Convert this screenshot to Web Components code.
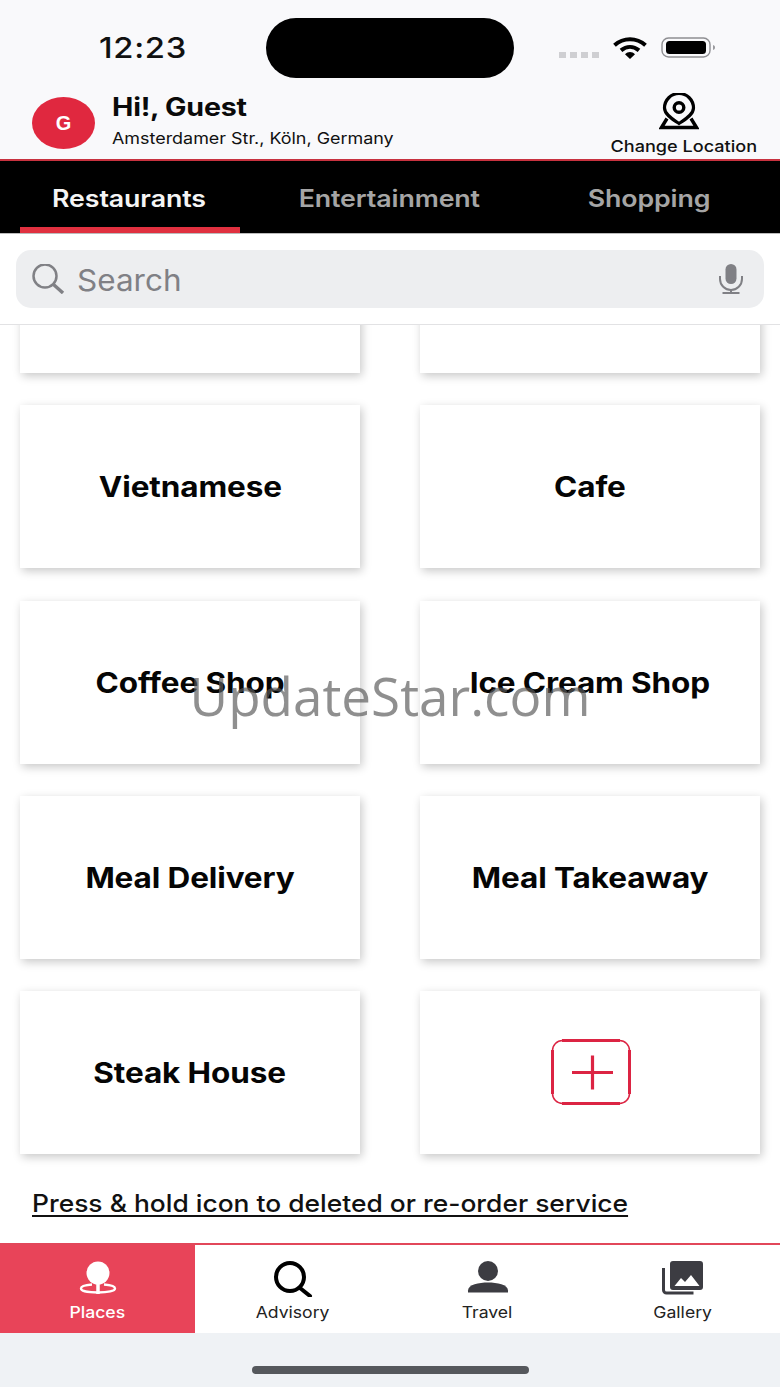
<!DOCTYPE html>
<html lang="en">
<head>
<meta charset="utf-8">
<title>Places</title>
<style>
  html, body { margin: 0; padding: 0; }
  body { width: 780px; height: 1387px; overflow: hidden; background: #fff; font-family: Inter, "Liberation Sans", Arial, sans-serif; color: #000; }
  app-shell { height: 1387px; }
</style>
</head>
<body>
<app-shell>
  <status-bar slot="top" time="12:23"></status-bar>
  <user-header slot="top" initial="G" name="Hi!, Guest" address="Amsterdamer Str., Köln, Germany"></user-header>
  <tab-bar slot="top">
    <tab-item active>Restaurants</tab-item>
    <tab-item>Entertainment</tab-item>
    <tab-item>Shopping</tab-item>
  </tab-bar>
  <search-box slot="top" placeholder="Search"></search-box>

  <service-grid>
    <service-card></service-card>
    <service-card></service-card>
    <service-card>Vietnamese</service-card>
    <service-card>Cafe</service-card>
    <service-card>Coffee Shop</service-card>
    <service-card>Ice Cream Shop</service-card>
    <service-card>Meal Delivery</service-card>
    <service-card>Meal Takeaway</service-card>
    <service-card>Steak House</service-card>
    <service-card add></service-card>
  </service-grid>

  <bottom-nav slot="bottom">
    <nav-item icon="places" active>Places</nav-item>
    <nav-item icon="advisory">Advisory</nav-item>
    <nav-item icon="travel">Travel</nav-item>
    <nav-item icon="gallery">Gallery</nav-item>
  </bottom-nav>
  <home-bar slot="bottom"></home-bar>
  <water-mark slot="over">UpdateStar.com</water-mark>
</app-shell>

<script>
class AppShell extends HTMLElement {
  constructor() {
    super();
    this.attachShadow({ mode: 'open' });
    this.shadowRoot.innerHTML = `
      <style>
        :host { display: flex; flex-direction: column; position: relative; overflow: hidden; }
        #main { flex: 1; min-height: 0; overflow: hidden; }
      </style>
      <slot name="top"></slot>
      <section id="main"><slot></slot></section>
      <slot name="bottom"></slot>
      <slot name="over"></slot>
    `;
  }
}

// the reference is stretched sideways, so most labels get a scaleX
class StatusBar extends HTMLElement {
  constructor() {
    super();
    this.attachShadow({ mode: 'open' });
    this.shadowRoot.innerHTML = `
      <style>
        :host { display: flex; align-items: flex-start; height: 90px; background: #f9f9fb; box-sizing: border-box; padding-top: 18px; }
        #time { width: 266px; box-sizing: border-box; padding: 13px 0 0 99px; font: 500 29px/33px Inter, sans-serif; letter-spacing: .6px; color: #111; }
        #time span { display: inline-block; transform: scaleX(1.13); transform-origin: left center; }
        #island { width: 248px; height: 60px; border-radius: 30px; background: #000; }
        #right { display: flex; align-items: flex-start; margin-left: 45px; padding-top: 19px; }
        #dots { display: flex; gap: 4px; margin-top: 15px; }
        #dots i { width: 7px; height: 6px; background: #cfcfd2; }
        #wifi { margin-left: 14px; }
        #batt { margin-left: 14px; }
      </style>
      <div id="time"><span></span></div>
      <div id="island"></div>
      <div id="right">
        <div id="dots"><i></i><i></i><i></i><i></i></div>
        <svg id="wifi" width="34" height="22" viewBox="0 0 34 22">
          <path d="M1.500 8.200C10.500 .2 23.500 .2 32.500 8.200" fill="none" stroke="#000" stroke-width="4"/>
          <path d="M8 13.400C13.500 8.800 20.500 8.800 26 13.400" fill="none" stroke="#000" stroke-width="4"/>
          <path d="M12 17.200C15 14.400 19 14.400 22 17.200L17 22Z" fill="#000"/>
        </svg>
        <svg id="batt" width="56" height="22" viewBox="0 0 56 22">
          <rect x="1" y="1" width="48" height="19" rx="6.500" fill="none" stroke="#8e8e92" stroke-width="1.400"/>
          <rect x="5" y="4" width="40" height="13" rx="3.500" fill="#000"/>
          <path d="M52 8c1.600.4 2 1.400 2 2.500s-.4 2.100-2 2.500z" fill="#9a9a9e"/>
        </svg>
      </div>
    `;
    this.shadowRoot.querySelector('#time span').textContent = this.getAttribute('time');
  }
}

class UserHeader extends HTMLElement {
  constructor() {
    super();
    this.attachShadow({ mode: 'open' });
    this.shadowRoot.innerHTML = `
      <style>
        :host { display: flex; height: 71px; box-sizing: border-box; background: #f9f9fb; border-bottom: 2px solid #c8323f; }
        #avatar { width: 63px; height: 52px; margin: 7px 0 0 32px; border-radius: 50%; background: #e0283f; color: #fff; font: 700 20px/52px "Liberation Sans", sans-serif; text-align: center; }
        #who { margin-left: 17px; flex: 1; white-space: nowrap; }
        #name, #addr { transform-origin: left center; }
        #name { font: 700 25px/30px Inter, sans-serif; margin-top: 2px; letter-spacing: -.2px; color: #0a0a0a; transform: scaleX(1.144); }
        #addr { font: 400 16px/20px Inter, sans-serif; margin-top: 6px; color: #111; transform: scaleX(1.12); }
        #change { width: 148px; margin: 3px 22px 0 0; display: flex; flex-direction: column; align-items: center; }
        #change svg { margin-left: -11px; display: block; }
        #change span { font: 500 16px/20px Inter, sans-serif; margin-top: 5px; color: #111; white-space: nowrap; transform: scaleX(1.13); }
      </style>
      <div id="avatar"></div>
      <div id="who"><div id="name"></div><div id="addr"></div></div>
      <div id="change">
        <svg width="40" height="38" viewBox="0 0 40 38">
          <path d="M20 30.500C14 26.500 5.500 21.500 5.500 15a14.500 14.500 0 0 1 29 0c0 6.500-8.500 11.500-14.500 15.500z" fill="none" stroke="#000" stroke-width="3.200"/>
          <circle cx="20" cy="14.500" r="4.800" fill="none" stroke="#000" stroke-width="3.400"/>
          <path d="M8 25.500L2.500 34.500h35L32 25.500" fill="none" stroke="#000" stroke-width="3.400"/>
        </svg>
        <span>Change Location</span>
      </div>
    `;
    const root = this.shadowRoot;
    root.getElementById('avatar').textContent = this.getAttribute('initial');
    root.getElementById('name').textContent = this.getAttribute('name');
    root.getElementById('addr').textContent = this.getAttribute('address');
  }
}

class TabBar extends HTMLElement {
  constructor() {
    super();
    this.attachShadow({ mode: 'open' });
    this.shadowRoot.innerHTML = `
      <style>
        :host { display: grid; grid-template-columns: 220px 298px 222px; padding-left: 20px; height: 73px; box-sizing: border-box; background: #000; border-bottom: 1px solid #bbb; }
      </style>
      <slot></slot>
    `;
  }
}

class TabItem extends HTMLElement {
  constructor() {
    super();
    this.attachShadow({ mode: 'open' });
    this.shadowRoot.innerHTML = `
      <style>
        :host { display: flex; align-items: center; justify-content: center; box-sizing: border-box; height: 72px; padding-top: 10px; border-bottom: 6px solid transparent; font: 600 24px/30px Inter, sans-serif; letter-spacing: -.1px; color: #a5a5a5; }
        :host([active]) { color: #f5f5f5; border-bottom-color: #e0303f; padding-right: 3px; }
        span { display: inline-block; transform: scaleX(1.115); }
      </style>
      <span><slot></slot></span>
    `;
  }
}

class SearchBox extends HTMLElement {
  constructor() {
    super();
    this.attachShadow({ mode: 'open' });
    this.shadowRoot.innerHTML = `
      <style>
        :host { display: block; box-sizing: border-box; height: 91px; padding: 16px 16px 0; background: #fff; border-bottom: 1px solid #e2e2e4; }
        #box { display: flex; align-items: center; height: 58px; border-radius: 15px; background: #edeef0; padding: 0 20px 0 15px; }
        #text { flex: 1; margin: 2px 0 0 12px; font: 400 30px/36px Inter, sans-serif; color: #808085; transform: scaleX(1.05); transform-origin: left center; }
      </style>
      <div id="box">
        <svg width="34" height="30" viewBox="0 0 34 30">
          <circle cx="14" cy="12" r="11.500" fill="none" stroke="#808085" stroke-width="2.500"/>
          <path d="M22.500 20.500l9.500 8.500" fill="none" stroke="#808085" stroke-width="3.400"/>
        </svg>
        <div id="text"></div>
        <svg width="26" height="30" viewBox="0 0 26 30">
          <rect x="7.500" y="0" width="11" height="20" rx="5.500" fill="#808085"/>
          <path d="M2 12v3a11 11 0 0 0 22 0v-3" fill="none" stroke="#808085" stroke-width="2"/>
          <path d="M13 26v3M4.500 29h17" fill="none" stroke="#808085" stroke-width="2"/>
        </svg>
      </div>
    `;
    this.shadowRoot.getElementById('text').textContent = this.getAttribute('placeholder');
  }
}

class ServiceGrid extends HTMLElement {
  constructor() {
    super();
    this.attachShadow({ mode: 'open' });
    this.shadowRoot.innerHTML = `
      <style>
        :host { display: block; }
        #list { display: grid; grid-template-columns: 340px 340px; column-gap: 60px; row-gap: 32.300px; padding: 0 20px; margin-top: -115px; }
        #hint { margin: 35px 0 0 32px; font: 500 24px/30px Inter, sans-serif; color: #111; text-decoration: underline; text-underline-offset: 3px; white-space: nowrap; transform: scaleX(1.1); transform-origin: left center; }
      </style>
      <div id="list"><slot></slot></div>
      <div id="hint">Press &amp; hold icon to deleted or re-order service</div>
    `;
  }
}

class ServiceCard extends HTMLElement {
  constructor() {
    super();
    this.attachShadow({ mode: 'open' });
    this.shadowRoot.innerHTML = `
      <style>
        :host { display: flex; align-items: center; justify-content: center; height: 163px; background: #fff; box-shadow: 2px 3px 9px rgba(0,0,0,.22); font: 700 28px/34px Inter, sans-serif; letter-spacing: -.1px; color: #050505; }
        span { display: inline-block; margin-top: 1px; transform: scaleX(1.125); white-space: nowrap; }
        svg { display: block; margin: -1px 0 0 1px; }
      </style>
      ${this.hasAttribute('add') ? `
      <svg width="80" height="66" viewBox="0 0 80 66">
        <rect x="1.500" y="1.500" width="77" height="63" rx="10" fill="none" stroke="#dc2443" stroke-width="1.500"/>
        <path d="M11 1.500h58M11 64.500h58M1.500 11v44M78.500 11v44" fill="none" stroke="#dc2443" stroke-width="3"/>
        <path d="M21 33.500h41M41.500 16.500v34" fill="none" stroke="#dc2443" stroke-width="3.200"/>
      </svg>` : '<span><slot></slot></span>'}
    `;
  }
}

const NAV_ICONS = {
  places: `<circle cx="21" cy="12" r="11.500" fill="#fff"/><path d="M21 20v13" stroke="#fff" stroke-width="3.500"/><path d="M15 23.500C8 24 4 25.300 4 27.500c0 2.500 7 4 17 4s17-1.500 17-4c0-2.200-4-3.500-11-4" fill="none" stroke="#fff" stroke-width="2.400"/>`,
  advisory: `<circle cx="18" cy="16" r="14" fill="none" stroke="#000" stroke-width="4"/><path d="M28 27l10 8" stroke="#000" stroke-width="4" stroke-linecap="round"/>`,
  travel: `<circle cx="21" cy="10" r="10" fill="#3c3c42"/><path d="M1 31.500v-2c0-6 11-8 20-8s20 2 20 8v2z" fill="#3c3c42"/>`,
  gallery: `<path fill-rule="evenodd" d="M11 0h27a3 3 0 0 1 3 3v23a3 3 0 0 1-3 3H11a3 3 0 0 1-3-3V3a3 3 0 0 1 3-3zM12.500 25h25L29 14l-6 7-4-4z" fill="#3c3c42"/><path d="M1.500 7v22a3 3 0 0 0 3 3h27" fill="none" stroke="#3c3c42" stroke-width="3"/>`
};

class BottomNav extends HTMLElement {
  constructor() {
    super();
    this.attachShadow({ mode: 'open' });
    this.shadowRoot.innerHTML = `
      <style>
        :host { display: grid; grid-template-columns: repeat(4, 195px); height: 90px; box-sizing: border-box; background: #fff; border-top: 2px solid #e2475a; }
      </style>
      <slot></slot>
    `;
  }
}

class NavItem extends HTMLElement {
  constructor() {
    super();
    this.attachShadow({ mode: 'open' });
    const icon = NAV_ICONS[this.getAttribute('icon')];
    this.shadowRoot.innerHTML = `
      <style>
        :host { display: flex; flex-direction: column; align-items: center; padding-top: 16px; font: 400 16px/20px Inter, sans-serif; color: #222; }
        :host([active]) { background: #e84459; color: #fff; font-weight: 500; }
        svg { display: block; }
        span { display: inline-block; margin-top: 5px; transform: scaleX(1.1); }
      </style>
      <svg width="42" height="36" viewBox="0 0 42 36">${icon}</svg>
      <span><slot></slot></span>
    `;
  }
}

class HomeBar extends HTMLElement {
  constructor() {
    super();
    this.attachShadow({ mode: 'open' });
    this.shadowRoot.innerHTML = `
      <style>
        :host { display: block; height: 54px; box-sizing: border-box; padding: 33px 251px 0 252px; background: #eff2f5; }
        div { height: 8px; border-radius: 4px; background: #55585c; }
      </style>
      <div></div>
    `;
  }
}

// stock-site stamp lying across the grid
class WaterMark extends HTMLElement {
  constructor() {
    super();
    this.attachShadow({ mode: 'open' });
    this.shadowRoot.innerHTML = `
      <style>
        :host { position: absolute; left: 0; right: 0; top: 660px; text-align: center; font: 400 53px/72px "Open Sans", sans-serif; color: rgba(90,90,90,.68); pointer-events: none; }
      </style>
      <slot></slot>
    `;
  }
}

customElements.define('app-shell', AppShell);
customElements.define('status-bar', StatusBar);
customElements.define('user-header', UserHeader);
customElements.define('tab-bar', TabBar);
customElements.define('tab-item', TabItem);
customElements.define('search-box', SearchBox);
customElements.define('service-grid', ServiceGrid);
customElements.define('service-card', ServiceCard);
customElements.define('bottom-nav', BottomNav);
customElements.define('nav-item', NavItem);
customElements.define('home-bar', HomeBar);
customElements.define('water-mark', WaterMark);
</script>
</body>
</html>
